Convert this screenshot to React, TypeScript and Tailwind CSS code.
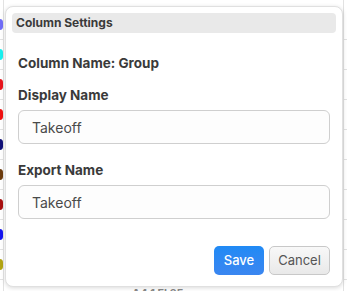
import React from 'react';

const dots = ['#6f6cf7', '#19f0ef', '#e8141c', '#f01010', '#101078', '#6b3a0c', '#a80e0e', '#1414f0', '#b2a412'];

const Field = ({ label, value }: { label: string; value: string }) => (
  <div className="flex flex-col">
    <label className="text-[13.5px] font-bold text-[#3a3a3a] leading-[20px]">{label}</label>
    <input
      readOnly
      value={value}
      className="mt-[5px] h-[34px] w-full rounded-[6px] border border-[#cfcfcf] bg-[#fdfdfd] px-[13px] text-[14px] text-[#4a4a4a] outline-none"
    />
  </div>
);

export default function App() {
  return (
    <div
      className="relative h-[291px] w-[347px] overflow-hidden bg-white"
      style={{ fontFamily: 'Inter, "Noto Sans", sans-serif' }}
    >
      {/* table behind the popup */}
      <div className="flex h-full">
        <div className="flex w-[4px] flex-col border-r border-[#e2e2e2] pt-[10px]">
          {dots.map((c) => (
            <div key={c} className="flex h-[30px] items-center border-b border-[#e2e2e2]">
              <div className="h-[11px] w-[8px] -ml-[4px] rounded-full" style={{ background: c }} />
            </div>
          ))}
        </div>
        <div className="flex-1" />
        <div className="flex w-[4px] flex-col border-l border-[#e2e2e2] pt-[10px]">
          {dots.map((c) => (
            <div key={c} className="h-[30px] border-b border-[#e2e2e2]" />
          ))}
        </div>
      </div>
      <div className="absolute bottom-[-10px] left-[132px] text-[11px] font-bold text-[#888]">A4 1 Fl 25</div>

      {/* popup */}
      <div className="absolute left-[5px] top-[6px] flex h-[281px] w-[338px] flex-col rounded-[8px] border border-[#e0e0e0] bg-white px-[6px] pt-[6px] shadow-[0_1px_4px_rgba(0,0,0,0.15)]">
        <div className="flex h-[20px] items-center rounded-[4px] bg-[#e9e9e9] px-[4px] text-[12px] font-bold text-[#3a3a3a]">
          Column Settings
        </div>
        <div className="flex flex-1 flex-col px-[6px]">
          <div className="mt-[20px] text-[13.5px] font-bold leading-[20px] text-[#3a3a3a]">Column Name: Group</div>
          <div className="mt-[12px]">
            <Field label="Display Name" value="Takeoff" />
          </div>
          <div className="mt-[16px]">
            <Field label="Export Name" value="Takeoff" />
          </div>
          <div className="mt-[27px] flex justify-end gap-[5px]">
            <button className="h-[29px] w-[50px] rounded-[5px] bg-gradient-to-b from-[#1f8af5] to-[#3a86f0] text-[13px] font-medium text-white">
              Save
            </button>
            <button className="h-[29px] w-[61px] rounded-[5px] border border-[#c8c8c8] bg-gradient-to-b from-[#f8f8f8] to-[#e9e9e9] text-[13px] text-[#555]">
              Cancel
            </button>
          </div>
        </div>
      </div>
    </div>
  );
}
